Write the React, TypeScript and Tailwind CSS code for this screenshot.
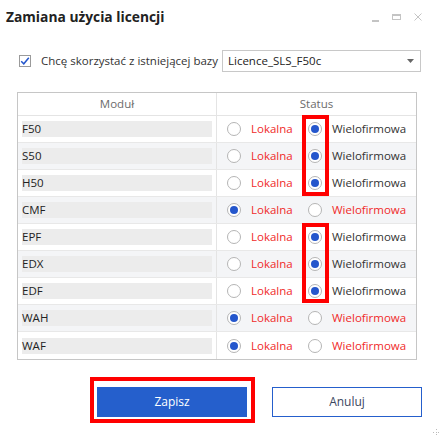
import React from "react";

type Row = { name: string; wielo: boolean };

const rows: Row[] = [
  { name: "F50", wielo: true },
  { name: "S50", wielo: true },
  { name: "H50", wielo: true },
  { name: "CMF", wielo: false },
  { name: "EPF", wielo: true },
  { name: "EDX", wielo: true },
  { name: "EDF", wielo: true },
  { name: "WAH", wielo: false },
  { name: "WAF", wielo: false },
];

function Radio({ checked }: { checked: boolean }) {
  return (
    <span className="flex h-[14px] w-[14px] shrink-0 items-center justify-center rounded-full border border-[#b5b5b5] bg-white">
      {checked && <span className="h-[8px] w-[8px] rounded-full bg-[#2456cc]" />}
    </span>
  );
}

export default function App() {
  return (
    <div
      className="relative h-[441px] w-[448px] overflow-hidden bg-white text-[11.5px] text-[#333]"
      style={{ fontFamily: '"Open Sans", "Noto Sans", sans-serif' }}
    >
      {/* Title bar */}
      <div className="flex h-[32px] items-center justify-between pl-[6px] pr-[26px] pt-[2px]">
        <span className="text-[13.8px] font-bold text-[#222]">Zamiana użycia licencji</span>
        <div className="flex items-center gap-[13px]">
          <span className="mt-[8px] h-[2px] w-[7px] bg-[#c4c4c4]" />
          <span className="h-[6px] w-[9px] border border-t-2 border-[#c4c4c4]" />
          <svg width="8" height="8" viewBox="0 0 8 8">
            <path d="M0.5 0.5L7.5 7.5M7.5 0.5L0.5 7.5" stroke="#c4c4c4" strokeWidth="1" />
          </svg>
        </div>
      </div>

      {/* Checkbox + select */}
      <div className="mt-[18px] flex h-[22px] items-center pl-[19px] pr-[27px]">
        <span className="flex h-[12px] w-[12px] shrink-0 items-center justify-center border border-[#9a9a9a]">
          <svg width="10" height="10" viewBox="0 0 10 10">
            <path d="M1.2 5.2L3.8 7.8L8.8 1.8" fill="none" stroke="#2456cc" strokeWidth="1.5" />
          </svg>
        </span>
        <span className="ml-[10px] whitespace-nowrap text-[#333]">Chcę skorzystać z istniejącej bazy</span>
        <div className="ml-auto flex h-[22px] w-[199px] items-center justify-between border border-[#c8c8c8] pl-[5px] pr-[6px]">
          <span className="text-[#222]">Licence_SLS_F50c</span>
          <svg width="7" height="4" viewBox="0 0 7 4">
            <path d="M0 0H7L3.5 4Z" fill="#666" />
          </svg>
        </div>
      </div>

      {/* Table */}
      <div className="ml-[17px] mt-[20px] w-[400px] border border-[#c6c6c6]">
        <div className="grid h-[23px] grid-cols-[199px_199px] border-b border-[#e4e4e4] text-[#6b6b6b]">
          <div className="flex items-center justify-center border-r border-[#e4e4e4]">Moduł</div>
          <div className="flex items-center justify-center">Status</div>
        </div>
        {rows.map((r, i) => (
          <div
            key={r.name}
            className={
              "grid h-[27px] grid-cols-[199px_199px] " +
              (i < rows.length - 1 ? "border-b border-[#e8e8e8] " : "") +
              (i % 2 === 1 ? "bg-[#f4f5f7]" : "bg-white")
            }
          >
            <div className="flex items-center border-r border-[#e4e4e4] px-[4px]">
              <div className="flex h-[16px] w-full items-center bg-[#ececec] text-[#222]">{r.name}</div>
            </div>
            <div className="flex items-center pl-[10px]">
              <Radio checked={!r.wielo} />
              <span className="ml-[10px] w-[57px] text-[#f02a2a]">Lokalna</span>
              <Radio checked={r.wielo} />
              <span className={"ml-[10px] " + (r.wielo ? "text-[#333]" : "text-[#f02a2a]")}>Wielofirmowa</span>
            </div>
          </div>
        ))}
      </div>

      {/* Buttons */}
      <div className="mt-[27px] flex gap-[25px] pl-[97px]">
        <button className="h-[30px] w-[150px] bg-[#255fcc] text-[12px] text-white">Zapisz</button>
        <button className="h-[30px] w-[150px] border border-[#255fcc] bg-white text-[12px] text-[#3b4660]">Anuluj</button>
      </div>

      {/* Annotation boxes */}
      <div className="absolute left-[302px] top-[115px] h-[81px] w-[27px] border-4 border-[#ff0000]" />
      <div className="absolute left-[302px] top-[223px] h-[80px] w-[27px] border-4 border-[#ff0000]" />
      <div className="absolute left-[90px] top-[377px] h-[46px] w-[165px] border-4 border-[#ff0000]" />

      {/* Resize grip */}
      <svg className="absolute left-[432px] top-[428px]" width="8" height="8" viewBox="0 0 8 8">
        <rect x="4" y="1" width="1" height="1" fill="#bbb" />
        <rect x="1" y="4" width="1" height="1" fill="#bbb" />
        <rect x="4" y="4" width="1" height="1" fill="#bbb" />
        <rect x="6" y="4" width="1" height="1" fill="#bbb" />
        <rect x="4" y="6" width="1" height="1" fill="#bbb" />
      </svg>
    </div>
  );
}
